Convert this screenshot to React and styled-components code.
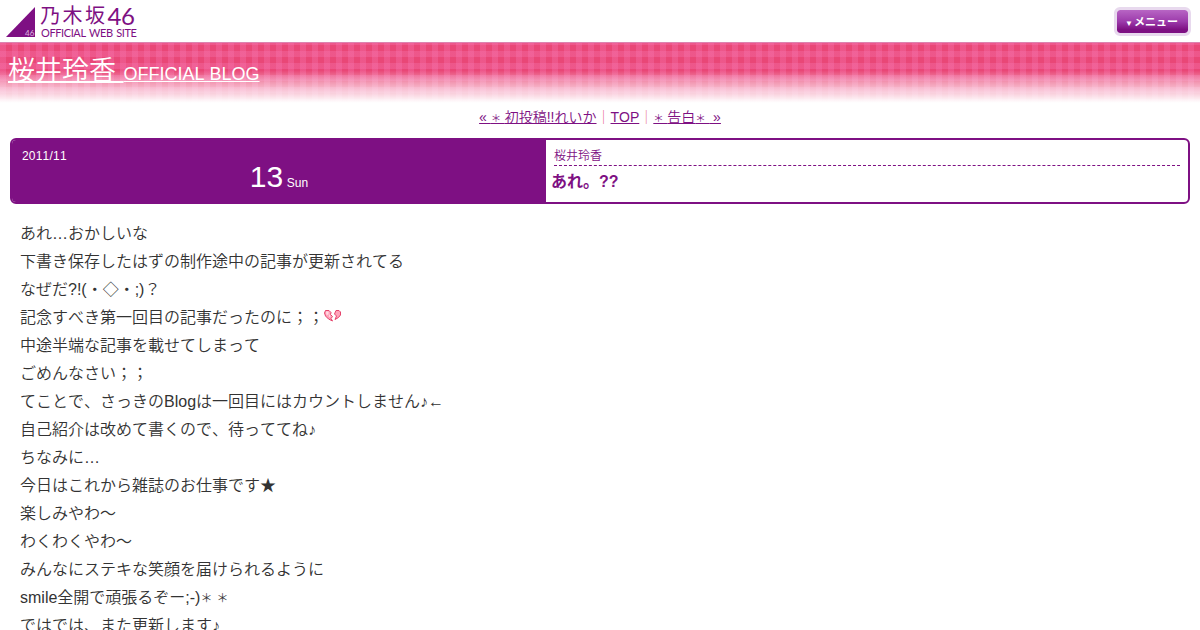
import styled, { createGlobalStyle } from "styled-components";

const GlobalStyle = createGlobalStyle`
  body {
    margin: 0;
    background: #fff;
    color: #333;
    font-family: "Liberation Sans", "Noto Sans CJK JP DemiLight", "Noto Sans CJK JP", sans-serif;
    font-size: 16px;
    font-kerning: none;
    overflow: hidden;
  }
`;

const Page = styled.div`
  height: 630px;
  overflow: hidden;
`;

const Header = styled.header`
  display: flex;
  justify-content: space-between;
  align-items: flex-start;
  box-sizing: border-box;
  height: 42px;
  padding: 5px 9px 0 5px;
`;

const LogoBox = styled.div`
  display: flex;
  height: 34px;
  color: #7e1083;
  white-space: nowrap;
`;

const LogoMark = styled.svg`
  width: 31px;
  height: 34px;
`;

const LogoText = styled.div`
  display: flex;
  flex-direction: column;
  padding-left: 4px;
`;

const LogoName = styled.div`
  display: flex;
  height: 20px;
  font-family: "Noto Sans CJK JP", sans-serif;
  font-size: 20px;
  line-height: 20px;
  letter-spacing: 2.5px;
`;

const LogoNumber = styled.span`
  font-family: Lato, sans-serif;
  font-size: 24px;
  line-height: 21px;
  letter-spacing: -0.4px;
`;

const LogoSub = styled.div`
  height: 14px;
  margin-left: 1px;
  font-family: Lato, sans-serif;
  font-size: 11px;
  line-height: 15px;
  letter-spacing: -0.4px;
  word-spacing: 1px;
`;

const MenuButton = styled.button`
  display: flex;
  align-items: center;
  justify-content: center;
  box-sizing: border-box;
  width: 77px;
  height: 29px;
  margin-top: 2px;
  padding: 1px 2px 0 0;
  border: 3px solid #e8d9ee;
  border-radius: 6px;
  background: linear-gradient(#b865c4, #9c3bab 50%, #7e1083 85%);
  background-clip: padding-box;
  color: #fff;
  font-family: "Liberation Sans", "Noto Sans CJK JP", sans-serif;
  font-size: 11px;
  font-weight: bold;
  line-height: 1;
`;

const Arrow = styled.span`
  font-size: 8px;
  margin: 3px 1px 0 0;
`;

const Banner = styled.div`
  height: 62px;
  box-sizing: border-box;
  padding: 8px 8px 0;
  border-top: 1px solid #dc84b0;
  background:
    linear-gradient(rgba(255, 255, 255, 0) 45%, rgba(255, 255, 255, 0.45) 65%, #fff 98%),
    repeating-linear-gradient(90deg, rgba(247, 120, 180, 0.32) 0 6px, transparent 6px 12px),
    repeating-linear-gradient(rgba(247, 120, 180, 0.32) 0 2px, transparent 2px 8px, rgba(247, 120, 180, 0.32) 8px 12px),
    #e94777;
`;

const BannerTitle = styled.h1`
  display: flex;
  align-items: baseline;
  margin: 0;
  font-size: 27px;
  font-weight: normal;
  line-height: 40px;
  white-space: pre;
`;

const BannerLink = styled.a`
  color: #fff;
  font-size: ${(p) => (p.$small ? "18px" : "27px")};
  text-decoration: underline;
  text-decoration-thickness: ${(p) => (p.$small ? "1px" : "2px")};
`;

const Pager = styled.nav`
  height: 34px;
  text-align: center;
  color: #e8668c;
  font-size: 14px;
  line-height: 27px;
`;

const PagerLink = styled.a`
  color: #7e1083;
  text-decoration: underline;
`;

const EntryHead = styled.div`
  display: flex;
  box-sizing: border-box;
  height: 66px;
  margin: 0 10px;
  border: 2px solid #7e1083;
  border-radius: 6px;
  overflow: hidden;
  color: #7e1083;
`;

const EntryDate = styled.div`
  width: 534px;
  box-sizing: border-box;
  padding: 8px 10px 0;
  background: #7e1083;
  color: #fff;
  font-size: 12px;
`;

const YearMonth = styled.div`
  line-height: 16px;
  letter-spacing: 0.2px;
`;

const DayLine = styled.div`
  text-align: center;
  line-height: 26px;
  letter-spacing: 0.1px;
`;

const Day = styled.span`
  font-size: 30px;
`;

const EntryText = styled.div`
  flex: 1;
  padding: 6px 8px 0;
`;

const Author = styled.div`
  height: 19px;
  border-bottom: 1px dashed #7e1083;
  font-size: 12px;
  line-height: 20px;
`;

const EntryTitle = styled.h2`
  margin: 3px 0 0 -3px;
  font-family: "Liberation Sans", "Noto Sans CJK JP", sans-serif;
  font-size: 16px;
  line-height: 26px;
`;

const EntryBody = styled.div`
  padding: 16px 20px 0;
`;

const Line = styled.div`
  height: 28px;
  line-height: 28px;
  white-space: nowrap;
`;

// keeps the full-width advance while drawing a smaller asterisk
const StarGlyph = styled.span`
  font-size: 0.75em;
  letter-spacing: 0.33em;
`;

const HeartIcon = styled.svg`
  width: 17px;
  height: 16px;
  vertical-align: -2px;
`;

const lines = [
  "あれ…おかしいな",
  "下書き保存したはずの制作途中の記事が更新されてる",
  "なぜだ?!(・◇・;)？",
  "記念すべき第一回目の記事だったのに；；",
  "中途半端な記事を載せてしまって",
  "ごめんなさい；；",
  "てことで、さっきのBlogは一回目にはカウントしません♪←",
  "自己紹介は改めて書くので、待っててね♪",
  "ちなみに…",
  "今日はこれから雑誌のお仕事です★",
  "楽しみやわ〜",
  "わくわくやわ〜",
  "みんなにステキな笑顔を届けられるように",
  "smile全開で頑張るぞー;-)＊＊",
  "ではでは、また更新します♪",
];

function withStars(text) {
  return text
    .split(/(＊)/)
    .map((part, i) =>
      part === "＊" ? <StarGlyph key={i}>{part}</StarGlyph> : part
    );
}

function Logo() {
  return (
    <LogoBox>
      <LogoMark viewBox="0 0 31 34">
        <path fill="#7e1083" d="M1 32 30 2v30z" />
        <text x="20" y="30.5" fill="#dcb6df" fontSize="8" fontFamily="Lato, sans-serif">
          46
        </text>
      </LogoMark>
      <LogoText>
        <LogoName>
          乃木坂<LogoNumber>46</LogoNumber>
        </LogoName>
        <LogoSub>OFFICIAL WEB SITE</LogoSub>
      </LogoText>
    </LogoBox>
  );
}

function BrokenHeart() {
  return (
    <HeartIcon viewBox="0 0 17 16">
      <path
        fill="#ffa3ba"
        stroke="#e5446c"
        d="M1.5 1.5H5L7 3.5 6.5 5.5 8.5 7.5 7 9.5 8.5 12 4.5 10 1.5 7 .5 4z"
      />
      <path
        fill="#ffa3ba"
        stroke="#e5446c"
        d="M12 1.5h3L16.5 3v3L14.5 8.5 11 10.5 12.5 7 10.5 5z"
      />
      <path fill="#ffdbe4" d="M2 2.5h2.500v3L2.500 6zM5 5l1.500 2.500L5 8z" />
    </HeartIcon>
  );
}

export default function App() {
  return (
    <Page>
      <GlobalStyle />
      <Header>
        <Logo />
        <MenuButton>
          <Arrow>▼</Arrow>メニュー
        </MenuButton>
      </Header>
      <Banner>
        <BannerTitle>
          <BannerLink>桜井玲香 </BannerLink>
          <BannerLink $small>OFFICIAL BLOG</BannerLink>
        </BannerTitle>
      </Banner>
      <Pager>
        <PagerLink>« {withStars("＊初投稿!!れいか")}</PagerLink>｜
        <PagerLink>TOP</PagerLink>｜
        <PagerLink>{withStars("＊告白＊")} »</PagerLink>
      </Pager>
      <EntryHead>
        <EntryDate>
          <YearMonth>2011/11</YearMonth>
          <DayLine>
            <Day>13</Day> Sun
          </DayLine>
        </EntryDate>
        <EntryText>
          <Author>桜井玲香</Author>
          <EntryTitle>あれ。??</EntryTitle>
        </EntryText>
      </EntryHead>
      <EntryBody>
        {lines.map((text, i) => (
          <Line key={text}>
            {withStars(text)}
            {i === 3 && <BrokenHeart />}
          </Line>
        ))}
      </EntryBody>
    </Page>
  );
}
